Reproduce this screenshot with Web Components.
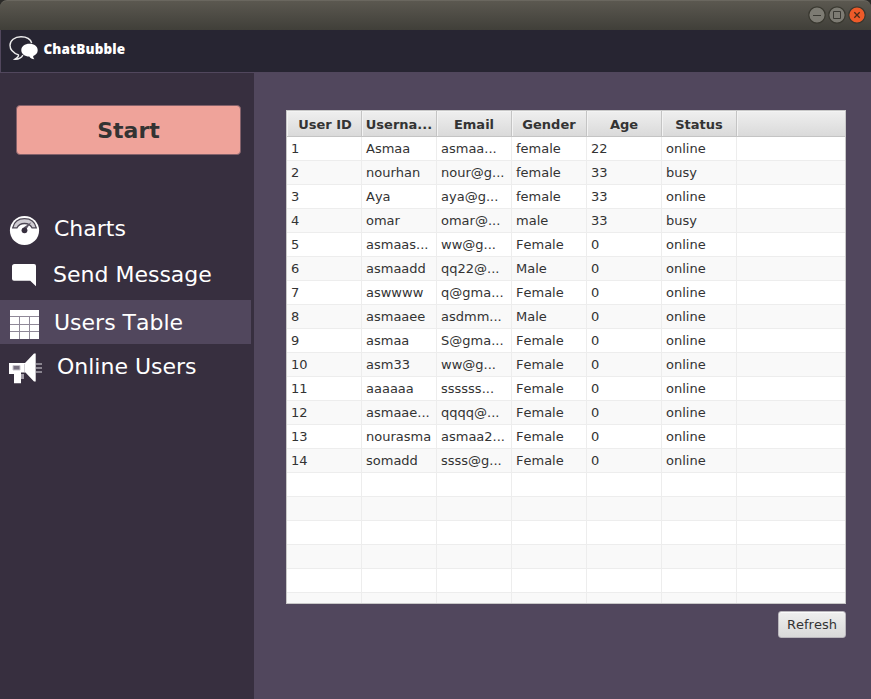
<!DOCTYPE html>
<html lang="en">
<head>
<meta charset="utf-8">
<title>ChatBubble</title>
<style>
html,body{margin:0;height:100%;overflow:hidden;background:#2b2a28}
body{font-family:"DejaVu Sans",sans-serif;color:#333;font-kerning:none}
</style>
</head>
<body>
<chat-app></chat-app>
<script>
const define = (name, html, init) => {
  const tpl = document.createElement('template');
  tpl.innerHTML = html;
  customElements.define(name, class extends HTMLElement {
    constructor() {
      super();
      this.attachShadow({mode: 'open'}).append(tpl.content.cloneNode(true));
    }
    connectedCallback() { if (init) init(this, this.shadowRoot); }
  });
};

define('title-bar', `<style>
:host{display:flex;box-sizing:border-box;height:30px;justify-content:flex-end;align-items:flex-start;padding:4px 4px 0 0;
background:linear-gradient(#5b5850,#403f39);border-top:1px solid #6a675f;border-radius:7px 7px 0 0}
svg{display:block;width:20px;height:20px}
</style>
<svg viewBox="0 0 20 20"><circle cx="10" cy="10" r="8.2" fill="#7d7b73" stroke="#38372f" stroke-width="1.2"/><path d="M6 10.500h8" stroke="#3a3933"/></svg>
<svg viewBox="0 0 20 20"><circle cx="10" cy="10" r="8.200" fill="#7d7b73" stroke="#38372f" stroke-width="1.2"/><path d="M6.500 6.500h7v7h-7z" fill="none" stroke="#3a3933"/></svg>
<svg viewBox="0 0 20 20"><circle cx="10" cy="10" r="8.200" fill="#ee5a29" stroke="#38372f" stroke-width="1.2"/><path d="M7.300 7.300l5.400 5.400M12.700 7.300l-5.400 5.400" stroke="#4a2a18" stroke-width="1.300"/></svg>`);

define('app-header', `<style>
:host{display:flex;box-sizing:border-box;height:43px;background:#272532;border-left:1px solid #51475d;border-bottom:1px solid #51475d;padding:5px 0 0 8px}
svg{width:30px;height:26px;flex:none}
b{font:900 13.5px/29px "Noto Sans","Open Sans",sans-serif;letter-spacing:.1px;color:#fff;margin-left:4.500px;white-space:nowrap}
</style>
<svg viewBox="0 0 30 26"><path d="M22.700 8C21.500 4 17.500 1.700 12 1.700C5.500 1.700 1 5.500 1 10.300c0 4.200 3 7.600 8.500 9.600c.3 1.500-.7 2.500-3.500 4.300c3.500.2 6.100-1.100 7.900-4.100" fill="none" stroke="#eee" stroke-width="1.400"/><path d="M20.500 8.800c4.700 0 8.200 2.700 8.200 6.400c0 2.700-1.800 4.800-4.500 5.800c0 1.300.2 2.200 1.300 3.200c-2.300 0-4-.9-5.200-2.700c-4.600 0-8-2.600-8-6.300s3.500-6.400 8.200-6.400z" fill="#fff"/></svg>
<b>ChatBubble</b>`);

define('start-button', `<style>
:host{display:flex;box-sizing:border-box;width:225px;height:50px;align-items:center;justify-content:center;padding-top:2px;background:#efa39a;border:1px solid #84616a;border-radius:4px;font:bold 22px/26px "DejaVu Sans",sans-serif;color:#333}
</style><slot></slot>`);

const icons = {
  gauge: `<circle cx="24.500" cy="24.500" r="14.600" fill="#fff"/><path d="M12.700 21.800C14 16.200 18.500 12.700 24.500 12.700S35 16.200 36.300 21.800H32C30.700 19 28 17.500 24.500 17.500S18.300 19 17 21.800z" fill="#d0cdd3" stroke="#4d4754" stroke-width="1.300"/><path d="M31.500 16L26.500 23l-3-1.500z" fill="#5d5665"/><circle cx="24.500" cy="24.300" r="2.900" fill="#372f3f"/>`,
  message: `<path d="M14.500 12h19.500q2 0 2 2v20.300l-5.800-5.600H14q-2 0-2-2V14.500q0-2.500 2.500-2.500z" fill="#fff"/>`,
  table: `<path d="M10 10h29v29H10z" fill="#fff"/><path d="M10 16.500h29M10 24.500h29M10 31.500h29M19.500 17v22M29.500 17v22" stroke="#8f8898"/>`,
  megaphone: `<path d="M9 19h16l9-9.500h1.700v28H34L25.500 28.500H21v10.700h-7V30H9z" fill="#fff"/><path d="M13 21.500h7v4.500h-7z" fill="#777080" stroke="#c9c5cd"/><path d="M21 30h3v5h-3z" fill="#a29da8"/><path d="M24.500 20v8" stroke="#d5d2d8"/><path d="M36 20h6M36 24h6M36 28h6" stroke="#a7a2ac" stroke-width="1.500"/>`
};
define('menu-item', `<style>
:host{display:flex;box-sizing:border-box;height:44px;width:251px;align-items:center;font-size:22px;line-height:26px;color:#fff;white-space:nowrap}
:host([selected]){background:#51475d}
svg{width:50px;height:44px;flex:none}
span{margin-left:var(--gap,4px);padding-top:2px}
</style><svg viewBox="0 0 50 44"></svg><span><slot></slot></span>`,
(el, root) => { root.querySelector('svg').innerHTML = icons[el.getAttribute('icon')]; });

define('side-bar', `<style>
:host{display:flex;flex-direction:column;box-sizing:border-box;width:254px;flex:none;background:#372f3f;padding-top:32px}
start-button{margin:0 0 51px 16px}
</style>
<start-button>Start</start-button>
<menu-item icon="gauge">Charts</menu-item>
<menu-item icon="message" style="margin-top:2px;--gap:3px">Send Message</menu-item>
<menu-item icon="table" selected style="margin-top:4px">Users Table</menu-item>
<menu-item icon="megaphone" style="--gap:7px">Online Users</menu-item>`);

const users = [
  ['1','Asmaa','asmaa...','female','22','online'],
  ['2','nourhan','nour@g...','female','33','busy'],
  ['3','Aya','aya@g...','female','33','online'],
  ['4','omar','omar@...','male','33','busy'],
  ['5','asmaas...','ww@g...','Female','0','online'],
  ['6','asmaadd','qq22@...','Male','0','online'],
  ['7','aswwww','q@gma...','Female','0','online'],
  ['8','asmaaee','asdmm...','Male','0','online'],
  ['9','asmaa','S@gma...','Female','0','online'],
  ['10','asm33','ww@g...','Female','0','online'],
  ['11','aaaaaa','ssssss...','Female','0','online'],
  ['12','asmaae...','qqqq@...','Female','0','online'],
  ['13','nourasma','asmaa2...','Female','0','online'],
  ['14','somadd','ssss@g...','Female','0','online']
];
define('users-table', `<style>
:host{display:block;box-sizing:border-box;width:560px;height:494px;overflow:hidden;background:#fff;border:1px solid #c8c8c8;font-size:13px;color:#333}
.row{display:grid;grid-template-columns:repeat(6,75px) 1fr;height:24px}
.row.alt{background:#f9f9f9}
.row>div{box-sizing:border-box;border-right:1px solid #ededed;border-bottom:1px solid #ededed;padding-left:4px;line-height:23px;white-space:nowrap;overflow:hidden}
.row>div:last-child{border-right:0}
.row.head{height:26px;background:linear-gradient(#efefef,#d9d9d9);font-weight:bold}
.row.head>div{border-color:#c4c4c4;box-shadow:inset 1px 1px #f3f3f3;text-align:center;line-height:28px;padding:0}
.row.head>div:first-child{padding-left:2px}
</style>`, (el, root) => {
  const add = (cells, cls) => {
    const row = document.createElement('div');
    row.className = cls;
    for (let i = 0; i < 7; i++) {
      const cell = document.createElement('div');
      cell.textContent = cells[i] || '';
      row.append(cell);
    }
    root.append(row);
  };
  add(['User ID','Userna...','Email','Gender','Age','Status'], 'row head');
  for (let i = 0; i < 20; i++) add(users[i] || [], i % 2 ? 'row alt' : 'row');
});

define('push-button', `<style>
:host{display:flex;box-sizing:border-box;width:68px;height:27px;align-items:center;justify-content:center;font-size:13px;color:#333;border:1px solid #b9b6bc;border-radius:3px;background:linear-gradient(#efefef,#d9d9d9);box-shadow:inset 0 1px #fafafa}
</style><slot></slot>`);

define('main-panel', `<style>
:host{display:flex;flex:1;flex-direction:column;align-items:flex-end;gap:7px;background:#51475d;padding:37px 25px 0 0}
</style><users-table></users-table><push-button>Refresh</push-button>`);

define('chat-app', `<style>
:host{display:flex;flex-direction:column;width:871px;height:699px}
section{display:flex;flex:1}
</style><title-bar></title-bar><app-header></app-header><section><side-bar></side-bar><main-panel></main-panel></section>`);
</script>
</body>
</html>
